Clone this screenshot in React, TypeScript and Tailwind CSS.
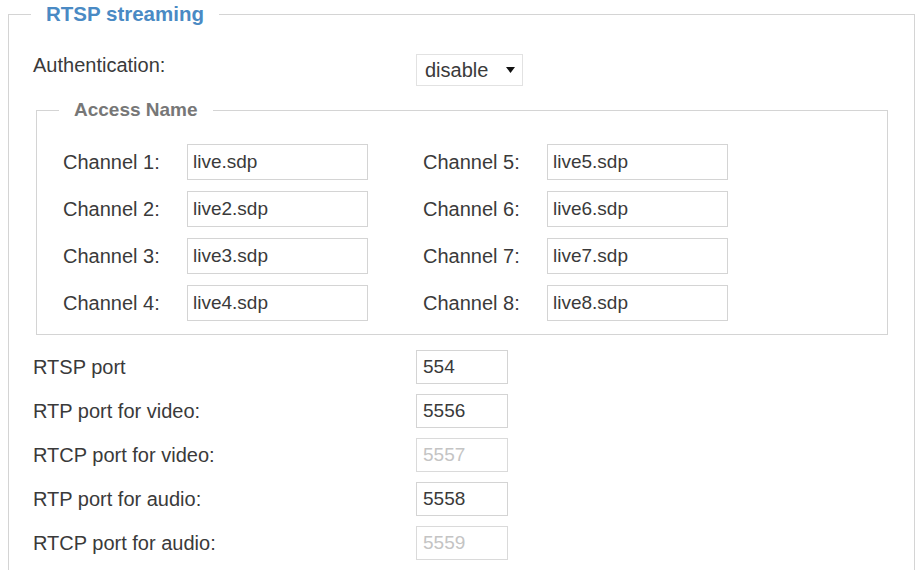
import React from "react";

const channelsLeft = [
  ["Channel 1:", "live.sdp"],
  ["Channel 2:", "live2.sdp"],
  ["Channel 3:", "live3.sdp"],
  ["Channel 4:", "live4.sdp"],
];
const channelsRight = [
  ["Channel 5:", "live5.sdp"],
  ["Channel 6:", "live6.sdp"],
  ["Channel 7:", "live7.sdp"],
  ["Channel 8:", "live8.sdp"],
];

const ports: { label: string; value: string; disabled?: boolean }[] = [
  { label: "RTSP port", value: "554" },
  { label: "RTP port for video:", value: "5556" },
  { label: "RTCP port for video:", value: "5557", disabled: true },
  { label: "RTP port for audio:", value: "5558" },
  { label: "RTCP port for audio:", value: "5559", disabled: true },
];

function ChannelRow({ label, value }: { label: string; value: string }) {
  return (
    <div className="flex h-[36px] items-center">
      <span className="w-[124px] shrink-0">{label}</span>
      <input
        readOnly
        value={value}
        className="h-[36px] w-[181px] border border-[#d4d4d4] bg-white px-[5px] text-[19px] text-[#3a3a3a] outline-none"
      />
    </div>
  );
}

export default function App() {
  return (
    <div className="min-h-[570px] bg-white font-['Liberation_Sans',Arial,sans-serif] text-[20px] leading-[22px] text-[#3a3a3a]">
      <fieldset className="ml-[8px] mt-[2px] w-[907px] border border-[#d4d4d4] pb-[20px]">
        <legend className="ml-[22px] px-[15px] text-[20.5px] font-bold leading-[24px] text-[#4a8ac4]">
          RTSP streaming
        </legend>
        <div className="pl-[24px] pt-[28px]">
          <div className="flex h-[32px] items-start">
            <span className="w-[383px] shrink-0">Authentication:</span>
            <div className="flex h-[32px] w-[107px] items-center justify-between border border-[#e2e2e2] bg-white pl-[8px] pr-[7px]">
              <span>disable</span>
              <svg width="9" height="6" viewBox="0 0 9 6">
                <path d="M0 0 L9 0 L4.5 6 Z" fill="#111" />
              </svg>
            </div>
          </div>

          <fieldset className="ml-[3px] mt-[13px] w-[852px] border border-[#d4d4d4] pb-[13px]">
            <legend className="ml-[22px] px-[15px] text-[19px] font-bold leading-[22px] text-[#777]">
              Access Name
            </legend>
            <div className="flex gap-[55px] pl-[26px] pt-[23px]">
              <div className="flex flex-col gap-[11px]">
                {channelsLeft.map(([l, v]) => (
                  <ChannelRow key={l} label={l} value={v} />
                ))}
              </div>
              <div className="flex flex-col gap-[11px]">
                {channelsRight.map(([l, v]) => (
                  <ChannelRow key={l} label={l} value={v} />
                ))}
              </div>
            </div>
          </fieldset>

          <div className="mt-[15px] flex flex-col gap-[10px]">
            {ports.map((p) => (
              <div key={p.label} className="flex h-[34px] items-center">
                <span className="w-[383px] shrink-0">{p.label}</span>
                <input
                  readOnly
                  disabled={p.disabled}
                  value={p.value}
                  className={
                    p.disabled
                      ? "h-[34px] w-[92px] border border-[#dadada] bg-white px-[6px] text-[19px] text-[#c4c4c4] outline-none"
                      : "h-[34px] w-[92px] border border-[#d4d4d4] bg-white px-[6px] text-[19px] text-[#3a3a3a] outline-none"
                  }
                />
              </div>
            ))}
          </div>
        </div>
      </fieldset>
    </div>
  );
}
